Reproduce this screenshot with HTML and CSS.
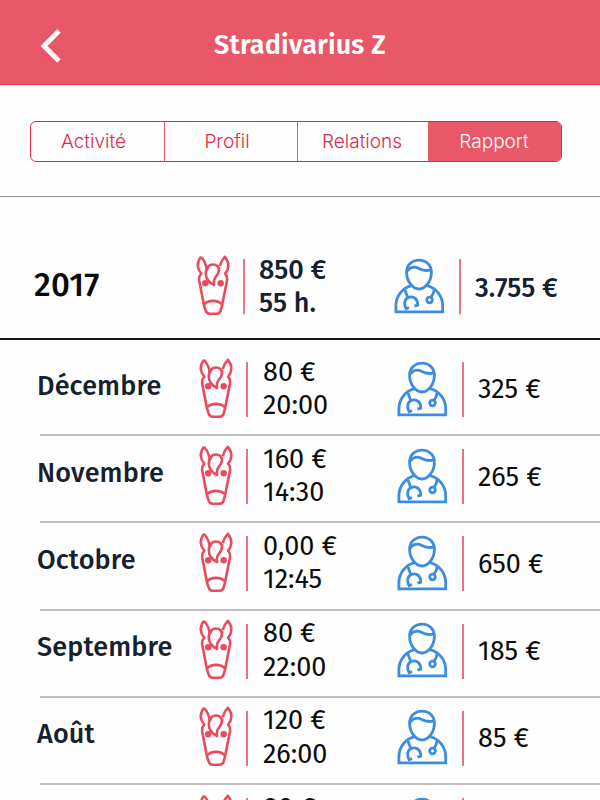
FILE: index.html
```html
<!DOCTYPE html>
<html lang="fr">
<head>
    <meta charset="UTF-8">
    <meta name="viewport" content="width=device-width, initial-scale=1.0">
    <title>Stradivarius Z - Rapport</title>
    <link rel="stylesheet" href="styles.css">
</head>
<body>
    <svg class="sprite" width="0" height="0">
        <symbol id="horse" viewBox="0 0 34 62">
            <path d="M5 1.800C2.800 4.500 1.600 7.500 1.800 11c.2 3 1.600 5.600 3.500 7.700C3.500 20.500 2.900 22.500 3.200 25.500L8 50.500l1.700 5.200c.7 2.100 1.900 3 3.800 3h7.400c1.900 0 3-.9 3.700-3l1.400-5.200 5-25c.3-3-.2-5-1.900-6.800 1.900-2.100 3-4.700 3.200-7.700.2-3.500-1.200-6.500-3.500-9.200-2.600 2.600-4.200 5.600-5.100 9.300M5 1.800c2.600 2.600 4.200 5.600 5.200 9.300.4 1.600.4 2.300.4 3"/>
            <path d="M10.200 14.200q1.400-.9 2.600-.7M22 13.400q1.200 0 2 .7"/>
            <path d="M17 9.500C12.500 9.500 9.800 13.800 9.800 18.500c0 5 3.200 9 8.200 11.500-.8-4 .2-6.200 2-8.500s3-4 3-6.500c0-3.200-2.500-5.500-6-5.500z"/>
            <path d="M8 49.300c4.300-4.600 13.700-4.600 18 0"/>
            <circle class="eye" cx="9.200" cy="28.300" r="3.200"/>
            <circle class="eye" cx="24.700" cy="28.300" r="3.200"/>
        </symbol>
        <symbol id="doctor" viewBox="0 0 51 56">
            <path d="M25 2.200c-7.200 0-12.400 5-12.400 12.300C12.600 23 18.500 31 25 31s12.400-8 12.400-16.500C37.400 7.200 32.200 2.200 25 2.200z"/>
            <path d="M13 13c3.500-3.800 7.500-4.900 11.300-2.700 4 2.300 8 2.800 12.500 1.500"/>
            <path d="M17.600 27.600C8 30 1.900 38.500 1.900 48v5.800h46.800V48c0-9.500-6.100-18-15.700-20.400"/>
            <path d="M11 32l2.600 7.200M15 49.500l-2.800 1.200c-2.500-4.200-2.200-9.100 2.100-11.100 4.200-2 8.500.5 9.300 5.300l.1 2.300-3.300 1"/>
            <path d="M40.200 31.500c-.3 3-1.200 5.200-3 7.400"/>
            <circle cx="35.500" cy="42" r="2.800"/>
        </symbol>
    </svg>

    <header class="header">
        <svg class="back" viewBox="0 0 20 34"><path d="M18 2L3 17l15 15"/></svg>
        <h1>Stradivarius Z</h1>
    </header>

    <nav class="tabs">
        <a class="tab">Activité</a>
        <a class="tab">Profil</a>
        <a class="tab">Relations</a>
        <a class="tab active">Rapport</a>
    </nav>

    <section class="total">
        <h2 class="year">2017</h2>
        <svg class="horse"><use href="#horse"/></svg>
        <div class="values"><span>850 €</span><span>55 h.</span></div>
        <svg class="doctor"><use href="#doctor"/></svg>
        <div class="values cost">3.755 €</div>
    </section>

    <ul class="months">
        <li class="month">
            <h3 class="name">Décembre</h3>
            <svg class="horse"><use href="#horse"/></svg>
            <div class="values"><span>80 €</span><span>20:00</span></div>
            <svg class="doctor"><use href="#doctor"/></svg>
            <div class="values cost">325 €</div>
        </li>
        <li class="month">
            <h3 class="name">Novembre</h3>
            <svg class="horse"><use href="#horse"/></svg>
            <div class="values"><span>160 €</span><span>14:30</span></div>
            <svg class="doctor"><use href="#doctor"/></svg>
            <div class="values cost">265 €</div>
        </li>
        <li class="month">
            <h3 class="name">Octobre</h3>
            <svg class="horse"><use href="#horse"/></svg>
            <div class="values"><span>0,00 €</span><span>12:45</span></div>
            <svg class="doctor"><use href="#doctor"/></svg>
            <div class="values cost">650 €</div>
        </li>
        <li class="month">
            <h3 class="name">Septembre</h3>
            <svg class="horse"><use href="#horse"/></svg>
            <div class="values"><span>80 €</span><span>22:00</span></div>
            <svg class="doctor"><use href="#doctor"/></svg>
            <div class="values cost">185 €</div>
        </li>
        <li class="month">
            <h3 class="name">Août</h3>
            <svg class="horse"><use href="#horse"/></svg>
            <div class="values"><span>120 €</span><span>26:00</span></div>
            <svg class="doctor"><use href="#doctor"/></svg>
            <div class="values cost">85 €</div>
        </li>
        <li class="month">
            <h3 class="name">Juillet</h3>
            <svg class="horse"><use href="#horse"/></svg>
            <div class="values"><span>80 €</span><span>20:00</span></div>
            <svg class="doctor"><use href="#doctor"/></svg>
            <div class="values cost">85 €</div>
        </li>
    </ul>
</body>
</html>
```
FILE: styles.css
```css
* {
    margin: 0;
    padding: 0;
    box-sizing: border-box;
}

body {
    height: 800px;
    overflow: hidden;
    background: #fefefe;
    color: #152130;
    font-family: "Fira Sans", "Noto Sans", sans-serif;
}

.sprite {
    display: block;
}

.header {
    display: grid;
    grid-template-columns: 40px 1fr 40px;
    align-items: center;
    height: 85px;
    padding: 4px 0 0;
    background: #e85868;
    border-bottom: 1px solid #e23c51;
    color: white;
}

.header h1 {
    padding-top: 2px;
    font-size: 27px;
    font-weight: 600;
    text-align: center;
    letter-spacing: 0.15px;
}

.back {
    width: 20px;
    height: 34px;
    margin: 4px 0 0 41px;
    fill: none;
    stroke: white;
    stroke-width: 4.8;
}

.tabs {
    display: grid;
    grid-template-columns: 133px 133px 131px 1fr;
    width: 532px;
    height: 41px;
    margin: 36px 0 0 30px;
    border: 1px solid #dc2a42;
    border-radius: 6px;
    overflow: hidden;
    color: #e02848;
    font-family: "Inter", sans-serif;
    font-size: 19px;
    font-weight: 300;
    line-height: 39px;
    text-align: center;
}

.tab {
    padding-right: 8px;
}

.tab:nth-child(n+3) {
    padding-right: 2px;
}

.tab + .tab {
    border-left: 1px solid #e85868;
}

.tab.active {
    background: #e85868;
    color: white;
}

.total,
.month {
    display: grid;
    align-items: center;
}

.total {
    grid-template-columns: 162px 34px 164px 51px 1fr;
    height: 144px;
    margin-top: 34px;
    padding: 37px 0 0 34px;
    border-top: 1px solid #8e8e8e;
    border-bottom: 2px solid #161616;
}

.year {
    padding-bottom: 3px;
    color: #0a0a0a;
    font-size: 33px;
    font-weight: 500;
    letter-spacing: 0.2px;
    line-height: 40px;
}

.horse {
    width: 34px;
    height: 62px;
    fill: none;
    stroke: #ea4a5e;
    stroke-width: 2.6;
    stroke-linejoin: round;
}

.eye {
    fill: #ea4a5e;
    stroke: none;
}

.doctor {
    width: 51px;
    height: 56px;
    fill: none;
    stroke: #3c8ce0;
    stroke-width: 2.8;
}

.values {
    display: flex;
    flex-direction: column;
    justify-content: center;
    height: 55px;
    margin-left: 13px;
    padding: 2px 0 0 14px;
    border-left: 2px solid #ec7381;
    font-size: 27px;
    font-weight: 500;
    line-height: 33.5px;
    white-space: nowrap;
}

.values.cost {
    margin-left: 14px;
}

.total .cost {
    padding-top: 5px;
}

.months {
    list-style: none;
    padding-top: 9px;
}

.month {
    grid-template-columns: 159px 34px 164px 51px 1fr;
    height: 87.2px;
    margin-left: 40px;
    padding-bottom: 6px;
    border-bottom: 2px solid #c2bcbc;
}

.month .name {
    margin-left: -3px;
    padding-bottom: 6px;
    font-size: 27px;
    font-weight: 500;
    letter-spacing: 0.15px;
}

.month .values {
    margin-top: 2px;
    padding: 0 0 1px 15px;
    color: #0c0c0c;
    font-weight: 400;
}

.month .cost {
    padding: 1px 0 0 14px;
}
```
